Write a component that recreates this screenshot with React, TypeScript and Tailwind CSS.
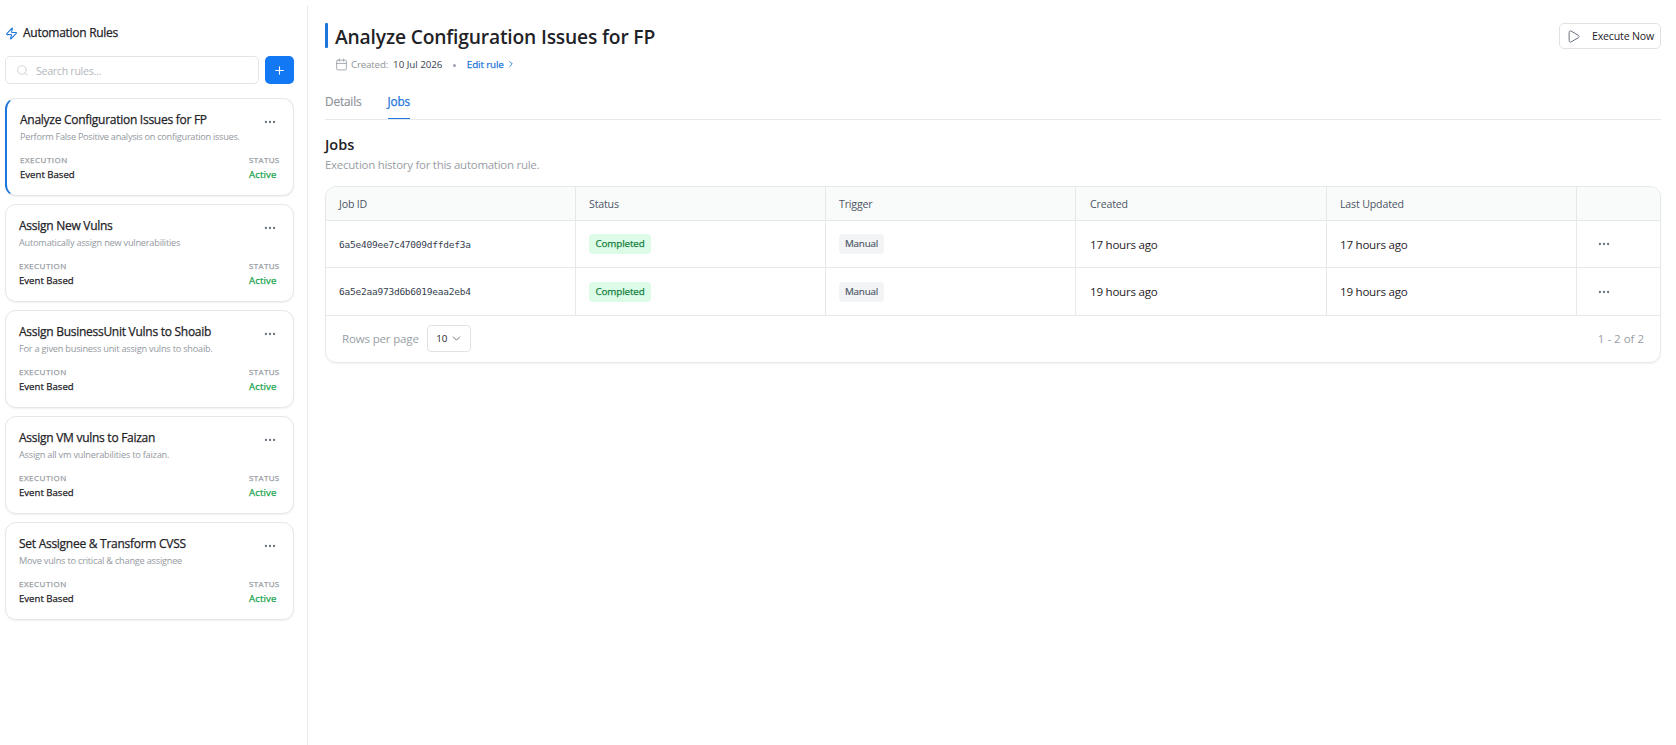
import { Calendar, ChevronDown, ChevronRight, Ellipsis, Play, Plus, Search, Zap } from 'lucide-react';

const rules = [
  { name: 'Analyze Configuration Issues for FP', description: 'Perform False Positive analysis on configuration issues.' },
  { name: 'Assign New Vulns', description: 'Automatically assign new vulnerabilities' },
  { name: 'Assign BusinessUnit Vulns to Shoaib', description: 'For a given business unit assign vulns to shoaib.' },
  { name: 'Assign VM vulns to Faizan', description: 'Assign all vm vulnerabilities to faizan.' },
  { name: 'Set Assignee & Transform CVSS', description: 'Move vulns to critical & change assignee' },
];

const jobs = [
  { id: '6a5e409ee7c47009dffdef3a', age: '17 hours ago' },
  { id: '6a5e2aa973d6b6019eaa2eb4', age: '19 hours ago' },
];

const columns = 'grid grid-cols-[250px_250px_250px_251px_250px_minmax(0,1fr)]';
const cell = 'flex items-center border-r border-[#e5e9eb] pl-[13px]';
const medium = '[-webkit-text-stroke:0.25px_currentColor]';

function RuleCard({ name, description, selected }: { name: string; description: string; selected: boolean }) {
  return (
    <article
      className={`h-[98px] rounded-[11px] border border-[#e5e7eb] bg-white pt-3 pr-3 pl-[13px] shadow-[0_1px_2px_rgba(0,0,0,0.06)] ${
        selected ? 'border-l-2 border-l-[#1c76db]' : ''
      }`}
    >
      <div className="flex justify-between">
        <h3 className={`text-[12px] leading-[18px] tracking-[-0.27px] text-[#1f2328] ${medium}`}>{name}</h3>
        <Ellipsis size={14} strokeWidth={2} className="mt-[3.5px] mr-1 text-[#6b7280]" />
      </div>
      <p className={`-mt-[0.5px] text-[9.2px] leading-4 whitespace-nowrap text-[#94999f] ${selected ? 'tracking-[-0.28px]' : 'tracking-[-0.22px]'}`}>
        {description}
      </p>
      <div className="mt-[9px] flex justify-between">
        <div>
          <div className={`text-[8px] leading-3 tracking-[0.5px] text-[#979ca3] ${medium}`}>EXECUTION</div>
          <div className={`mt-[2px] text-[9.6px] leading-[14px] text-[#1f2328] ${medium}`}>Event Based</div>
        </div>
        <div className="w-8">
          <div className={`text-[8px] leading-3 tracking-[0.35px] text-[#979ca3] ${medium}`}>STATUS</div>
          <div className={`mt-[2px] text-[9.6px] leading-[14px] tracking-[0.15px] text-[#16a34a] ${medium}`}>Active</div>
        </div>
      </div>
    </article>
  );
}

function Sidebar() {
  return (
    <aside className="mt-[6px] w-[308px] shrink-0 border-r border-[#e5e7eb] pt-[17px] pr-[13px] pl-[5px]">
      <div className="flex h-[20px] items-center gap-[5px]">
        <Zap size={13} strokeWidth={2} className="text-[#1c76db]" />
        <h2 className={`text-[12px] leading-[18px] tracking-[-0.28px] text-[#1f2328] ${medium}`}>Automation Rules</h2>
      </div>
      <div className="mt-[13px] flex gap-[6px]">
        <div className="flex h-7 w-[254px] items-center gap-[7px] rounded-[5px] border border-[#e2e4e8] pl-[10px]">
          <Search size={13} strokeWidth={1.8} className="text-[#d0d3d8]" />
          <span className="pt-px text-[10.6px] leading-4 tracking-[-0.28px] text-[#b3b7bd]">Search rules...</span>
        </div>
        <button className="flex h-7 w-[29px] items-center justify-center rounded-[5px] bg-[#1278f3] text-white">
          <Plus size={13} strokeWidth={2} />
        </button>
      </div>
      <div className="mt-[14px] flex flex-col gap-2">
        {rules.map((rule, index) => (
          <RuleCard key={rule.name} {...rule} selected={index === 0} />
        ))}
      </div>
    </aside>
  );
}

function JobsTable() {
  return (
    <div className="mt-3 overflow-hidden rounded-[11px] border border-[#e5e9eb] shadow-[0_1px_2px_rgba(0,0,0,0.06)]">
      <div className={`${columns} h-[34px] border-b border-[#e5e9eb] bg-[#f9fbfb] text-[10.6px] leading-4 tracking-[-0.16px] text-[#4b5563]`}>
        {['Job ID', 'Status', 'Trigger', 'Created', 'Last Updated'].map((label) => (
          <div key={label} className={`${cell} ${label === 'Created' ? 'pl-[14px]' : ''}`}>{label}</div>
        ))}
        <div />
      </div>
      {jobs.map((job, index) => (
        <div key={job.id} className={`${columns} border-b border-[#e5e9eb] ${index === 0 ? 'h-[47px]' : 'h-12'}`}>
          <div className={`${cell} pt-[2px] font-['DejaVu_Sans_Mono',monospace] text-[9.5px] tracking-[-0.23px] text-[#374151]`}>{job.id}</div>
          <div className={cell}>
            <span className={`h-5 rounded-[4px] bg-[#dcfce7] px-[6.5px] text-[9.8px] leading-[19px] tracking-[-0.12px] text-[#15803d] ${medium}`}>Completed</span>
          </div>
          <div className={cell}>
            <span className="h-5 rounded-[4px] bg-[#f3f4f6] px-[6px] text-[9.8px] leading-[19px] tracking-[-0.2px] text-[#4b5563] [-webkit-text-stroke:0.15px_currentColor]">Manual</span>
          </div>
          <div className={`${cell} pt-px pl-[14px] text-[11.6px] tracking-[-0.25px] text-[#1f2328]`}>{job.age}</div>
          <div className={`${cell} pt-px text-[11.6px] tracking-[-0.25px] text-[#1f2328]`}>{job.age}</div>
          <div className="flex items-center pl-5 text-[#6b7280]">
            <Ellipsis size={14} strokeWidth={2} />
          </div>
        </div>
      ))}
      <div className="flex h-[46px] items-center pr-4 pb-px pl-4 text-[11.5px] text-[#999ea5]">
        <span className="tracking-[-0.15px]">Rows per page</span>
        <button className="ml-[8.5px] flex h-[27px] w-[44px] items-center justify-between rounded-[4px] border border-[#dfe2e6] pr-[7px] pl-2 text-[#1f2328]">
          <span className="text-[9.8px] leading-4 tracking-[-0.1px]">10</span>
          <ChevronDown size={13} strokeWidth={1.8} className="text-[#6b7280]" />
        </button>
        <span className="ml-auto">1 - 2 of 2</span>
      </div>
    </div>
  );
}

export default function App() {
  return (
    <div className="flex h-[745px] overflow-hidden bg-white font-['Open_Sans','Noto_Sans',sans-serif]">
      <Sidebar />
      <main className="min-w-0 flex-1 pt-[23px] pr-[15px] pl-[17px]">
        <header className="flex items-start justify-between">
          <div>
            <div className="flex h-[25px] items-center gap-[7px]">
              <span className="h-[25px] w-[3px] rounded-[1px] bg-[#1c76db]" />
              <h1 className="pt-[2px] text-[19.25px] leading-[23px] font-semibold tracking-[-0.18px] text-[#1f2328]">
                Analyze Configuration Issues for FP
              </h1>
            </div>
            <div className="mt-2 flex h-4 items-center pl-[9.5px] text-[9.8px] leading-4 tracking-[-0.12px]">
              <Calendar size={13} strokeWidth={1.6} className="text-[#9a9fa6]" />
              <span className="ml-[3.5px] pt-px tracking-[-0.2px] text-[#8f949b]">Created:</span>
              <span className="ml-[5px] pt-px tracking-[-0.05px] text-[#374151]">10 Jul 2026</span>
              <span className="mt-[2px] ml-[10.5px] size-[3px] rounded-full bg-[#9ca3af]" />
              <span className={`ml-[11px] pt-px text-[#1c76db] ${medium}`}>Edit rule</span>
              <ChevronRight size={10} strokeWidth={2.2} className="ml-[2px] text-[#1c76db]" />
            </div>
          </div>
          <button className="flex h-[26px] w-[102px] items-center justify-between rounded-[5px] border border-[#dfe2e6] pr-[6px] pl-[6px]">
            <Play size={15} strokeWidth={1.6} className="text-[#6b7280]" />
            <span className="text-[10.6px] leading-4 tracking-[-0.18px] text-[#1f2328]">Execute Now</span>
          </button>
        </header>
        <nav className="mt-[18px] flex h-[30px] gap-[26px] border-b border-[#e5e9eb] text-[11.75px] leading-[23px] tracking-[-0.12px]">
          <span className="h-[29px] text-[#8f949b] [-webkit-text-stroke:0.2px_currentColor]">Details</span>
          <span className={`h-[29px] border-b border-[#1c76db] text-[#1c76db] ${medium}`}>Jobs</span>
        </nav>
        <section className="mt-[14px]">
          <h2 className="text-[14.5px] leading-[21px] font-semibold text-[#1f2328]">Jobs</h2>
          <p className="mt-px text-[11.5px] leading-[18px] tracking-[-0.27px] text-[#999ea5]">Execution history for this automation rule.</p>
          <JobsTable />
        </section>
      </main>
    </div>
  );
}
